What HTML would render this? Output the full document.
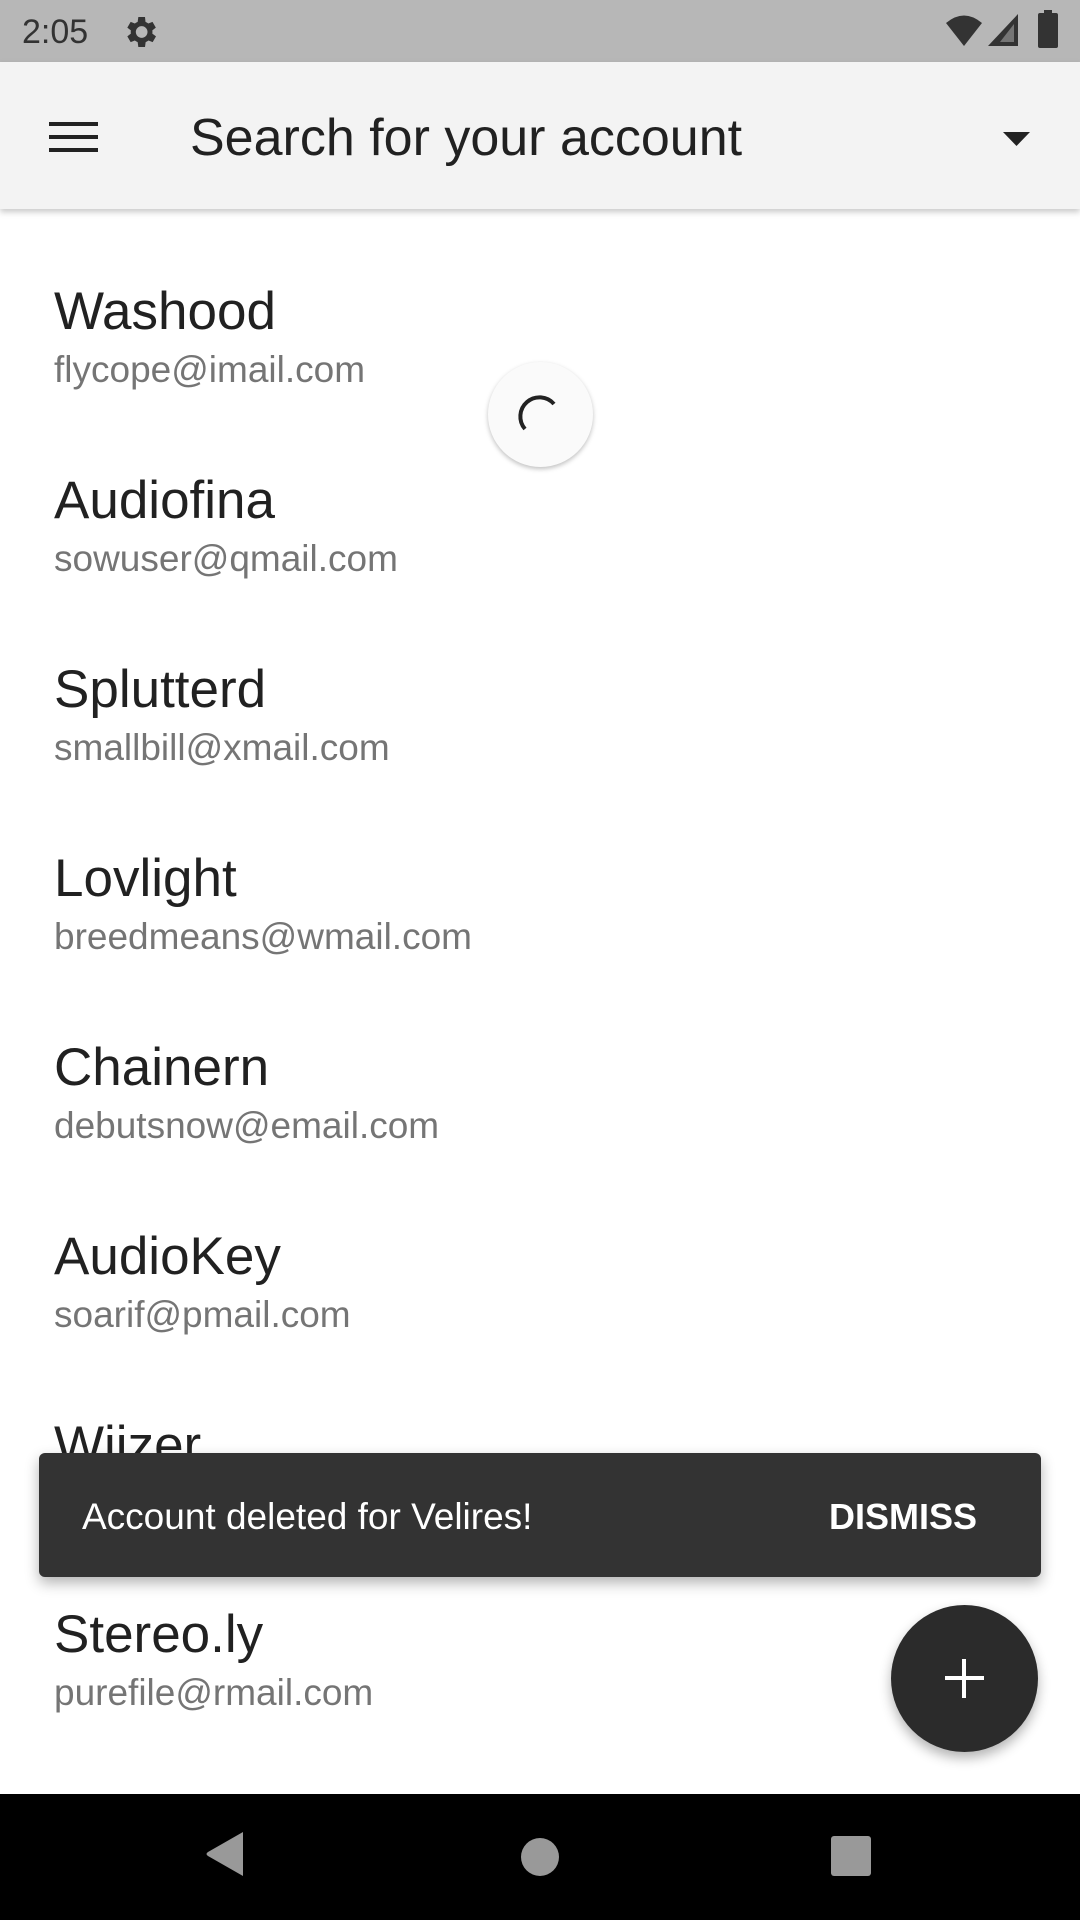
<!DOCTYPE html>
<html><head><meta charset="utf-8"><style>
*{margin:0;padding:0;box-sizing:border-box}
body{width:1080px;height:1920px;position:relative;overflow:hidden;background:#fff;font-family:"Liberation Sans",sans-serif}
.sb{position:absolute;left:0;top:0;width:1080px;height:62px;background:#b7b7b7}
.time{position:absolute;left:22px;top:13px;font-size:34px;color:#333}
.ab{position:absolute;left:0;top:62px;width:1080px;height:147px;background:#f3f3f3;box-shadow:0 3px 6px rgba(0,0,0,.22);z-index:2}
.title{position:absolute;left:190px;top:46px;font-size:52px;color:#212121}
.it{position:absolute;left:54px}
.n{font-size:53px;color:#212121;line-height:1}
.e{font-size:37px;color:#757575;line-height:1;margin-top:13px}
.snack{position:absolute;left:39px;top:1453px;width:1002px;height:124px;background:#333;border-radius:6px;box-shadow:0 6px 14px rgba(0,0,0,.3);z-index:3}
.snack .t{position:absolute;left:43px;top:43px;font-size:37px;color:#fff}
.snack .d{position:absolute;right:64px;top:43px;font-size:36px;color:#fff;font-weight:bold}
.fab{position:absolute;left:891px;top:1605px;width:147px;height:147px;border-radius:50%;background:#2b2b2b;box-shadow:0 6px 12px rgba(0,0,0,.3);z-index:3}
.spin{position:absolute;left:488px;top:362px;width:105px;height:105px;border-radius:50%;background:#fafafa;box-shadow:0 2px 5px rgba(0,0,0,.25)}
.nav{position:absolute;left:0;top:1794px;width:1080px;height:126px;background:#000}
</style></head><body>
<div class="sb">
<div class="time">2:05</div>
<svg style="position:absolute;left:120px;top:12px" width="40" height="40" viewBox="0 0 24 24"><path fill="#333" d="M19.4 13a7.5 7.5 0 0 0 0-2l2.1-1.6-2-3.5-2.5 1a7.3 7.3 0 0 0-1.7-1L15 3h-4l-.4 2.9a7.3 7.3 0 0 0-1.7 1l-2.5-1-2 3.5L6.5 11a7.5 7.5 0 0 0 0 2l-2.1 1.6 2 3.5 2.5-1a7.3 7.3 0 0 0 1.7 1L11 21h4l.4-2.9a7.3 7.3 0 0 0 1.7-1l2.5 1 2-3.5zM13 15.5a3.5 3.5 0 1 1 0-7 3.5 3.5 0 0 1 0 7z"/></svg>
<svg style="position:absolute;left:944px;top:14px" width="40" height="34" viewBox="0 0 40 34"><path fill="#333" d="M2 9 Q20-6 38 9 L20 32Z"/></svg>
<svg style="position:absolute;left:988px;top:14px" width="32" height="34" viewBox="0 0 32 34"><path fill="#333" d="M30 0V32H0Z"/><path fill="#b7b7b7" d="M26 10V28H12Z" opacity=".5"/></svg>
<div style="position:absolute;left:1038px;top:13px;width:20px;height:35px;background:#333;border-radius:2px"></div>
<div style="position:absolute;left:1044px;top:10px;width:8px;height:4px;background:#333"></div>
</div>
<div class="ab">
<div style="position:absolute;left:49px;top:60px;width:49px;height:4px;background:#222"></div>
<div style="position:absolute;left:49px;top:73px;width:49px;height:4px;background:#222"></div>
<div style="position:absolute;left:49px;top:86px;width:49px;height:4px;background:#222"></div>
<div class="title">Search for your account</div>
<svg style="position:absolute;left:1003px;top:70px" width="27" height="14"><path d="M0 0H27L13.5 14Z" fill="#222"/></svg>
</div>
<div class="it" style="top:285px"><div class="n">Washood</div><div class="e">flycope@imail.com</div></div>
<div class="it" style="top:474px"><div class="n">Audiofina</div><div class="e">sowuser@qmail.com</div></div>
<div class="it" style="top:663px"><div class="n">Splutterd</div><div class="e">smallbill@xmail.com</div></div>
<div class="it" style="top:852px"><div class="n">Lovlight</div><div class="e">breedmeans@wmail.com</div></div>
<div class="it" style="top:1041px"><div class="n">Chainern</div><div class="e">debutsnow@email.com</div></div>
<div class="it" style="top:1230px"><div class="n">AudioKey</div><div class="e">soarif@pmail.com</div></div>
<div class="it" style="top:1419px"><div class="n">Wiizer</div></div>
<div class="it" style="top:1608px"><div class="n">Stereo.ly</div><div class="e">purefile@rmail.com</div></div>
<div class="spin"><svg width="105" height="105" viewBox="0 0 105 105"><path d="M37 67 A17 17 0 0 1 66 42" fill="none" stroke="#222" stroke-width="4"/></svg></div>
<div class="snack"><div class="t">Account deleted for Velires!</div><div class="d">DISMISS</div></div>
<div class="fab"><div style="position:absolute;left:54px;top:71px;width:39px;height:4px;background:#fff"></div><div style="position:absolute;left:71px;top:54px;width:4px;height:39px;background:#fff"></div></div>
<div class="nav">
<svg style="position:absolute;left:205px;top:38px" width="40" height="44"><path d="M38 0V44L3 24Q0 22 3 20Z" fill="#999"/></svg>
<div style="position:absolute;left:521px;top:44px;width:38px;height:38px;border-radius:50%;background:#999"></div>
<div style="position:absolute;left:831px;top:42px;width:40px;height:40px;border-radius:3px;background:#999"></div>
</div>
</body></html>
